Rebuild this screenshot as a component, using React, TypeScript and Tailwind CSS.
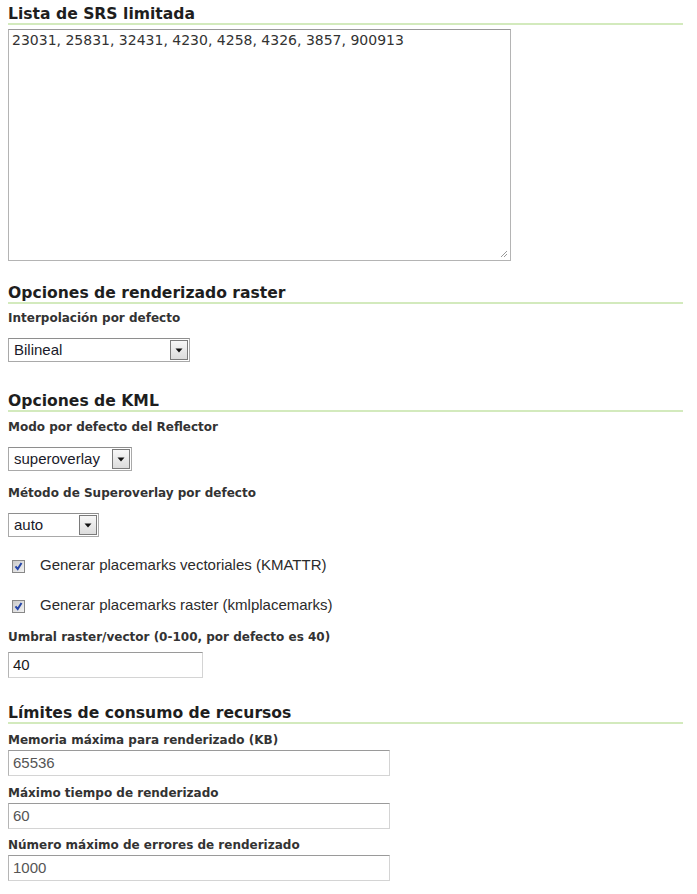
import React from "react";

const heading = "font-['DejaVu_Sans',sans-serif] font-bold text-[15.6px] leading-[18px] pt-[5px] text-[#1e1e1e] border-b-2 border-[#d3eabd] w-[675px]";
const label = "font-['DejaVu_Sans',sans-serif] font-bold text-[12px] leading-[15px] text-[#333]";
const field = "font-['Liberation_Sans',Arial,sans-serif] text-[15px]";

function Select({ value, width }: { value: string; width: number }) {
  return (
    <div
      className="flex items-stretch h-[24px] bg-white border border-[#a9a9a9] border-t-[#8e8e8e] p-[1px]"
      style={{ width }}
    >
      <span className={`${field} text-[15.5px] flex-1 pl-[4px] leading-[20px] text-[#1a1a2a]`}>{value}</span>
      <span className="w-[18px] flex items-center justify-center border border-[#7a7a7a] bg-gradient-to-b from-[#f7f7f7] to-[#dcdcdc]">
        <svg width="8" height="5" viewBox="0 0 8 5">
          <path d="M0.5 0.5h7L4 4.5z" fill="#111" />
        </svg>
      </span>
    </div>
  );
}

function Check({ text }: { text: string }) {
  return (
    <div className="flex items-center h-[20px]">
      <span className="ml-[4px] w-[13px] h-[13px] flex items-center justify-center border border-[#888] bg-gradient-to-br from-[#c9c9c9] to-[#f2f2f2]">
        <svg width="9" height="9" viewBox="0 0 9 9">
          <path d="M1.5 4.3l2.2 2.7 3.8-6" fill="none" stroke="#2545a8" strokeWidth="2" />
        </svg>
      </span>
      <span className={`${field} ml-[15px] text-[#2b2b2b] leading-[20px] -mt-[3px]`}>{text}</span>
    </div>
  );
}

function Input({ value, width, dim }: { value: string; width: number; dim?: boolean }) {
  return (
    <div
      className={`${field} h-[26px] leading-[24px] pl-[4px] bg-white border border-[#d4d4d4] border-t-[#9a9a9a] border-l-[#b5b5b5] ${dim ? "text-[#555]" : "text-[#1a1a1a]"}`}
      style={{ width }}
    >
      {value}
    </div>
  );
}

export default function App() {
  return (
    <div className="bg-white min-h-[894px] px-[8px] flex flex-col items-start">
      {/* SRS */}
      <h2 className={heading}>Lista de SRS limitada</h2>
      <div className="relative mt-[4px] w-[503px] h-[232px] border border-[#b4b4b4] border-t-[#999] bg-white pl-[3px] pt-[2px] font-['DejaVu_Sans',sans-serif] text-[14px] leading-[17px] text-[#333]">
        23031, 25831, 32431, 4230, 4258, 4326, 3857, 900913
        <svg className="absolute right-[2px] bottom-[2px]" width="9" height="9" viewBox="0 0 9 9">
          <path d="M8 2L2 8M8 5L5 8" stroke="#999" strokeWidth="1" />
        </svg>
      </div>

      {/* Raster */}
      <h2 className={`${heading} mt-[18px]`}>Opciones de renderizado raster</h2>
      <div className={`${label} mt-[7px]`}>Interpolación por defecto</div>
      <div className="mt-[12px]">
        <Select value="Bilineal" width={182} />
      </div>

      {/* KML */}
      <h2 className={`${heading} mt-[25px]`}>Opciones de KML</h2>
      <div className={`${label} mt-[8px]`}>Modo por defecto del Reflector</div>
      <div className="mt-[12px]">
        <Select value="superoverlay" width={124} />
      </div>
      <div className={`${label} mt-[15px]`}>Método de Superoverlay por defecto</div>
      <div className="mt-[12px]">
        <Select value="auto" width={91} />
      </div>
      <div className="mt-[19px]">
        <Check text="Generar placemarks vectoriales (KMATTR)" />
      </div>
      <div className="mt-[20px]">
        <Check text="Generar placemarks raster (kmlplacemarks)" />
      </div>
      <div className={`${label} mt-[14px]`}>Umbral raster/vector (0-100, por defecto es 40)</div>
      <div className="mt-[7px]">
        <Input value="40" width={195} />
      </div>

      {/* Limits */}
      <h2 className={`${heading} mt-[21px]`}>Límites de consumo de recursos</h2>
      <div className={`${label} mt-[9px]`}>Memoria máxima para renderizado (KB)</div>
      <div className="mt-[2px]">
        <Input value="65536" width={382} dim />
      </div>
      <div className={`${label} mt-[10px]`}>Máximo tiempo de renderizado</div>
      <div className="mt-[2px]">
        <Input value="60" width={382} dim />
      </div>
      <div className={`${label} mt-[9px]`}>Número máximo de errores de renderizado</div>
      <div className="mt-[2px]">
        <Input value="1000" width={382} dim />
      </div>
    </div>
  );
}
